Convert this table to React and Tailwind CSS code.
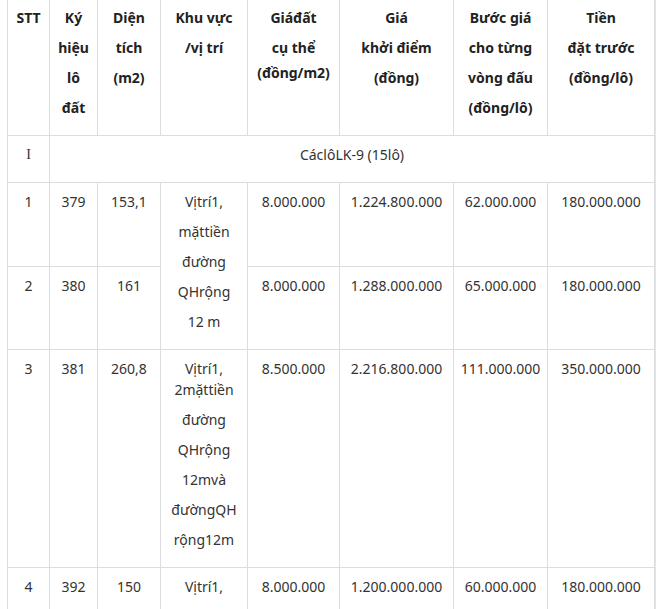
const th = "border border-[#dddddd] px-[6px] pt-[8px] pb-[8px] align-top text-center font-bold text-[#222222]";
const td = "border border-[#dddddd] px-[6px] pt-[8px] pb-[8px] align-top text-center";

function Lines({ items }) {
  return (
    <>
      {items.map((t, i) => (
        <div key={i} className="mb-[9px] leading-[21px]">{t}</div>
      ))}
    </>
  );
}

const rows = [
  { stt: "1", ky: "379", dt: "153,1", gia: "8.000.000", kd: "1.224.800.000", buoc: "62.000.000", tien: "180.000.000",
    kv: ["Vịtrí1,", "mặttiền", "đường", "QHrộng", "12 m"], span: 2 },
  { stt: "2", ky: "380", dt: "161", gia: "8.000.000", kd: "1.288.000.000", buoc: "65.000.000", tien: "180.000.000" },
  { stt: "3", ky: "381", dt: "260,8", gia: "8.500.000", kd: "2.216.800.000", buoc: "111.000.000", tien: "350.000.000",
    kv: [<>Vịtrí1,<br />2mặttiền</>, "đường", "QHrộng", "12mvà", "đườngQH", "rộng12m"], span: 1 },
  { stt: "4", ky: "392", dt: "150", gia: "8.000.000", kd: "1.200.000.000", buoc: "60.000.000", tien: "180.000.000",
    kv: ["Vịtrí1,", "mặttiền", "đường", "QHrộng", "12 m"], span: 1 },
];

export default function App() {
  return (
    <div className="bg-white min-h-screen font-['Noto_Sans',sans-serif] text-[14px] text-[#333333]">
      <div className="pl-[7px] w-[656px] border-r border-[#e3e3e3]">
        <table className="border-collapse table-fixed w-[647px] mt-[-2px]">
          <colgroup>
            <col className="w-[42px]" />
            <col className="w-[48px]" />
            <col className="w-[63px]" />
            <col className="w-[87px]" />
            <col className="w-[92px]" />
            <col className="w-[114px]" />
            <col className="w-[94px]" />
            <col className="w-[107px]" />
          </colgroup>
          <thead>
            <tr>
              <th className={th}><Lines items={["STT"]} /></th>
              <th className={th}><Lines items={["Ký", "hiệu", "lô", "đất"]} /></th>
              <th className={th}><Lines items={["Diện", "tích", "(m2)"]} /></th>
              <th className={th}><Lines items={["Khu vực", "/vị trí"]} /></th>
              <th className={th}>
                <div className="mb-[9px] leading-[21px]">Giáđất</div>
                <div className="leading-[21px]">cụ thể</div>
                <div className="mt-[4px] leading-[21px]">(đồng/m2)</div>
              </th>
              <th className={th}><Lines items={["Giá", "khởi điểm", "(đồng)"]} /></th>
              <th className={th}><Lines items={["Bước giá", "cho từng", "vòng đấu", "(đồng/lô)"]} /></th>
              <th className={th}><Lines items={["Tiền", "đặt trước", "(đồng/lô)"]} /></th>
            </tr>
          </thead>
          <tbody>
            <tr>
              <td className={`${td} font-['Liberation_Serif',serif]`}><Lines items={["I"]} /></td>
              <td className={td} colSpan={7}><Lines items={["CáclôLK-9 (15lô)"]} /></td>
            </tr>
            {rows.map((r) => (
              <tr key={r.stt}>
                <td className={td}><Lines items={[r.stt]} /></td>
                <td className={td}><Lines items={[r.ky]} /></td>
                <td className={td}><Lines items={[r.dt]} /></td>
                {r.kv && (
                  <td className={td} rowSpan={r.span}><Lines items={r.kv} /></td>
                )}
                <td className={td}><Lines items={[r.gia]} /></td>
                <td className={td}><Lines items={[r.kd]} /></td>
                <td className={td}><Lines items={[r.buoc]} /></td>
                <td className={td}><Lines items={[r.tien]} /></td>
              </tr>
            ))}
          </tbody>
        </table>
      </div>
    </div>
  );
}
